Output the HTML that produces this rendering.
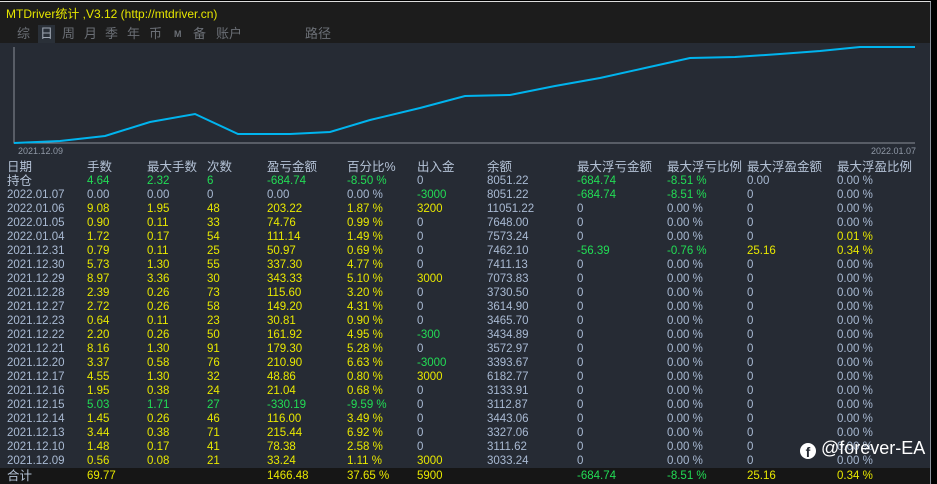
<!DOCTYPE html>
<html><head><meta charset="utf-8"><style>
body{margin:0;width:937px;height:483px;background:#000;overflow:hidden;font-family:"Liberation Sans","Noto Sans CJK SC",sans-serif;}
#p{position:absolute;left:0;top:1px;width:930px;height:482px;background:#262b34;border-top:1px solid #ddd;border-right:1px solid #8a8f99;}
#hd{position:absolute;left:0;top:0;width:930px;height:41px;background:#1c1c1c;}
.t{position:absolute;left:6px;top:3px;font-size:12px;color:#e6e600;}
.tabs{position:absolute;top:23px;font-size:13px;color:#6b6f76;width:400px;height:18px;}
.tabs span{position:absolute;top:0;white-space:nowrap;line-height:18px;}
.r{position:absolute;left:0;width:930px;height:14px;line-height:14px;font-size:11.5px;color:#a9bad3;}
.r span{position:absolute;top:0;white-space:nowrap;}
.h{font-size:12.5px;color:#b4c2d6;}
.y{color:#e8e800}.g{color:#22dd55}
.c1{left:7px}.c2{left:87px}.c3{left:147px}.c4{left:207px}.c5{left:267px}.c6{left:347px}.c7{left:417px}.c8{left:487px}.c9{left:577px}.c10{left:667px}.c11{left:747px}.c12{left:837px}
</style></head><body>
<div id="p">
<div id="hd"><div class="t">MTDriver统计 ,V3.12 (http://mtdriver.cn)</div>
<div class="tabs"><span style="left:17px">综</span><span style="left:38px;background:#2a3038;color:#a0a8b4;padding:0 2px">日</span><span style="left:62px">周</span><span style="left:84px">月</span><span style="left:105px">季</span><span style="left:127px">年</span><span style="left:149px">币</span><span style="left:174px;font-size:9px;font-weight:bold">M</span><span style="left:193px">备</span><span style="left:216px">账户</span><span style="left:305px">路径</span></div></div>
<svg style="position:absolute;left:0;top:0" width="930" height="160">
<polyline points="14,45 14,141 915,141" fill="none" stroke="#8a8f99" stroke-width="1"/>
<polyline points="14,141 60,139 105,134 150,120 195,112 238,132 290,132 330,130 370,118 420,106 465,94 510,93 555,84 600,76 645,66 690,56 735,55 780,52 820,49 860,45 915,45" fill="none" stroke="#00b4ee" stroke-width="2"/>
<text x="18" y="152" font-size="9" fill="#8f98a6" font-family="Liberation Sans">2021.12.09</text>
<text x="871" y="152" font-size="9" fill="#8f98a6" font-family="Liberation Sans">2022.01.07</text>
</svg>
<div class="r h" style="top:158px"><span class="c1">日期</span><span class="c2">手数</span><span class="c3">最大手数</span><span class="c4">次数</span><span class="c5">盈亏金额</span><span class="c6">百分比%</span><span class="c7">出入金</span><span class="c8">余额</span><span class="c9">最大浮亏金额</span><span class="c10">最大浮亏比例</span><span class="c11">最大浮盈金额</span><span class="c12">最大浮盈比例</span></div>
<div class="r" style="top:172px"><span class="c1 h">持仓</span><span class="c2 g">4.64</span><span class="c3 g">2.32</span><span class="c4 g">6</span><span class="c5 g">-684.74</span><span class="c6 g">-8.50 %</span><span class="c7">0</span><span class="c8">8051.22</span><span class="c9 g">-684.74</span><span class="c10 g">-8.51 %</span><span class="c11">0.00</span><span class="c12">0.00 %</span></div>
<div class="r" style="top:186px"><span class="c1">2022.01.07</span><span class="c2">0.00</span><span class="c3">0.00</span><span class="c4">0</span><span class="c5">0.00</span><span class="c6">0.00 %</span><span class="c7 g">-3000</span><span class="c8">8051.22</span><span class="c9 g">-684.74</span><span class="c10 g">-8.51 %</span><span class="c11">0</span><span class="c12">0.00 %</span></div>
<div class="r" style="top:200px"><span class="c1">2022.01.06</span><span class="c2 y">9.08</span><span class="c3 y">1.95</span><span class="c4 y">48</span><span class="c5 y">203.22</span><span class="c6 y">1.87 %</span><span class="c7 y">3200</span><span class="c8">11051.22</span><span class="c9">0</span><span class="c10">0.00 %</span><span class="c11">0</span><span class="c12">0.00 %</span></div>
<div class="r" style="top:214px"><span class="c1">2022.01.05</span><span class="c2 y">0.90</span><span class="c3 y">0.11</span><span class="c4 y">33</span><span class="c5 y">74.76</span><span class="c6 y">0.99 %</span><span class="c7">0</span><span class="c8">7648.00</span><span class="c9">0</span><span class="c10">0.00 %</span><span class="c11">0</span><span class="c12">0.00 %</span></div>
<div class="r" style="top:228px"><span class="c1">2022.01.04</span><span class="c2 y">1.72</span><span class="c3 y">0.17</span><span class="c4 y">54</span><span class="c5 y">111.14</span><span class="c6 y">1.49 %</span><span class="c7">0</span><span class="c8">7573.24</span><span class="c9">0</span><span class="c10">0.00 %</span><span class="c11">0</span><span class="c12 y">0.01 %</span></div>
<div class="r" style="top:242px"><span class="c1">2021.12.31</span><span class="c2 y">0.79</span><span class="c3 y">0.11</span><span class="c4 y">25</span><span class="c5 y">50.97</span><span class="c6 y">0.69 %</span><span class="c7">0</span><span class="c8">7462.10</span><span class="c9 g">-56.39</span><span class="c10 g">-0.76 %</span><span class="c11 y">25.16</span><span class="c12 y">0.34 %</span></div>
<div class="r" style="top:256px"><span class="c1">2021.12.30</span><span class="c2 y">5.73</span><span class="c3 y">1.30</span><span class="c4 y">55</span><span class="c5 y">337.30</span><span class="c6 y">4.77 %</span><span class="c7">0</span><span class="c8">7411.13</span><span class="c9">0</span><span class="c10">0.00 %</span><span class="c11">0</span><span class="c12">0.00 %</span></div>
<div class="r" style="top:270px"><span class="c1">2021.12.29</span><span class="c2 y">8.97</span><span class="c3 y">3.36</span><span class="c4 y">30</span><span class="c5 y">343.33</span><span class="c6 y">5.10 %</span><span class="c7 y">3000</span><span class="c8">7073.83</span><span class="c9">0</span><span class="c10">0.00 %</span><span class="c11">0</span><span class="c12">0.00 %</span></div>
<div class="r" style="top:284px"><span class="c1">2021.12.28</span><span class="c2 y">2.39</span><span class="c3 y">0.26</span><span class="c4 y">73</span><span class="c5 y">115.60</span><span class="c6 y">3.20 %</span><span class="c7">0</span><span class="c8">3730.50</span><span class="c9">0</span><span class="c10">0.00 %</span><span class="c11">0</span><span class="c12">0.00 %</span></div>
<div class="r" style="top:298px"><span class="c1">2021.12.27</span><span class="c2 y">2.72</span><span class="c3 y">0.26</span><span class="c4 y">58</span><span class="c5 y">149.20</span><span class="c6 y">4.31 %</span><span class="c7">0</span><span class="c8">3614.90</span><span class="c9">0</span><span class="c10">0.00 %</span><span class="c11">0</span><span class="c12">0.00 %</span></div>
<div class="r" style="top:312px"><span class="c1">2021.12.23</span><span class="c2 y">0.64</span><span class="c3 y">0.11</span><span class="c4 y">23</span><span class="c5 y">30.81</span><span class="c6 y">0.90 %</span><span class="c7">0</span><span class="c8">3465.70</span><span class="c9">0</span><span class="c10">0.00 %</span><span class="c11">0</span><span class="c12">0.00 %</span></div>
<div class="r" style="top:326px"><span class="c1">2021.12.22</span><span class="c2 y">2.20</span><span class="c3 y">0.26</span><span class="c4 y">50</span><span class="c5 y">161.92</span><span class="c6 y">4.95 %</span><span class="c7 g">-300</span><span class="c8">3434.89</span><span class="c9">0</span><span class="c10">0.00 %</span><span class="c11">0</span><span class="c12">0.00 %</span></div>
<div class="r" style="top:340px"><span class="c1">2021.12.21</span><span class="c2 y">8.16</span><span class="c3 y">1.30</span><span class="c4 y">91</span><span class="c5 y">179.30</span><span class="c6 y">5.28 %</span><span class="c7">0</span><span class="c8">3572.97</span><span class="c9">0</span><span class="c10">0.00 %</span><span class="c11">0</span><span class="c12">0.00 %</span></div>
<div class="r" style="top:354px"><span class="c1">2021.12.20</span><span class="c2 y">3.37</span><span class="c3 y">0.58</span><span class="c4 y">76</span><span class="c5 y">210.90</span><span class="c6 y">6.63 %</span><span class="c7 g">-3000</span><span class="c8">3393.67</span><span class="c9">0</span><span class="c10">0.00 %</span><span class="c11">0</span><span class="c12">0.00 %</span></div>
<div class="r" style="top:368px"><span class="c1">2021.12.17</span><span class="c2 y">4.55</span><span class="c3 y">1.30</span><span class="c4 y">32</span><span class="c5 y">48.86</span><span class="c6 y">0.80 %</span><span class="c7 y">3000</span><span class="c8">6182.77</span><span class="c9">0</span><span class="c10">0.00 %</span><span class="c11">0</span><span class="c12">0.00 %</span></div>
<div class="r" style="top:382px"><span class="c1">2021.12.16</span><span class="c2 y">1.95</span><span class="c3 y">0.38</span><span class="c4 y">24</span><span class="c5 y">21.04</span><span class="c6 y">0.68 %</span><span class="c7">0</span><span class="c8">3133.91</span><span class="c9">0</span><span class="c10">0.00 %</span><span class="c11">0</span><span class="c12">0.00 %</span></div>
<div class="r" style="top:396px"><span class="c1">2021.12.15</span><span class="c2 g">5.03</span><span class="c3 g">1.71</span><span class="c4 g">27</span><span class="c5 g">-330.19</span><span class="c6 g">-9.59 %</span><span class="c7">0</span><span class="c8">3112.87</span><span class="c9">0</span><span class="c10">0.00 %</span><span class="c11">0</span><span class="c12">0.00 %</span></div>
<div class="r" style="top:410px"><span class="c1">2021.12.14</span><span class="c2 y">1.45</span><span class="c3 y">0.26</span><span class="c4 y">46</span><span class="c5 y">116.00</span><span class="c6 y">3.49 %</span><span class="c7">0</span><span class="c8">3443.06</span><span class="c9">0</span><span class="c10">0.00 %</span><span class="c11">0</span><span class="c12">0.00 %</span></div>
<div class="r" style="top:424px"><span class="c1">2021.12.13</span><span class="c2 y">3.44</span><span class="c3 y">0.38</span><span class="c4 y">71</span><span class="c5 y">215.44</span><span class="c6 y">6.92 %</span><span class="c7">0</span><span class="c8">3327.06</span><span class="c9">0</span><span class="c10">0.00 %</span><span class="c11">0</span><span class="c12">0.00 %</span></div>
<div class="r" style="top:438px"><span class="c1">2021.12.10</span><span class="c2 y">1.48</span><span class="c3 y">0.17</span><span class="c4 y">41</span><span class="c5 y">78.38</span><span class="c6 y">2.58 %</span><span class="c7">0</span><span class="c8">3111.62</span><span class="c9">0</span><span class="c10">0.00 %</span><span class="c11">0</span><span class="c12">0.00 %</span></div>
<div class="r" style="top:452px"><span class="c1">2021.12.09</span><span class="c2 y">0.56</span><span class="c3 y">0.08</span><span class="c4 y">21</span><span class="c5 y">33.24</span><span class="c6 y">1.11 %</span><span class="c7 y">3000</span><span class="c8">3033.24</span><span class="c9">0</span><span class="c10">0.00 %</span><span class="c11">0</span><span class="c12">0.00 %</span></div>
<div style="position:absolute;left:0;top:466px;width:930px;height:16px;background:#161616"></div>
<div class="r" style="top:467px"><span class="c1 h">合计</span><span class="c2 y">69.77</span><span class="c5 y">1466.48</span><span class="c6 y">37.65 %</span><span class="c7 y">5900</span><span class="c9 g">-684.74</span><span class="c10 g">-8.51 %</span><span class="c11 y">25.16</span><span class="c12 y">0.34 %</span></div>
<div style="position:absolute;left:800px;top:441px;width:16px;height:16px;border-radius:50%;background:#fff;color:#262b34;font:bold 14px 'Liberation Sans';text-align:center;line-height:19px">f</div>
<div style="position:absolute;left:821px;top:436px;font-size:18px;color:#fff">@forever-EA</div>
</div>
</body></html>
